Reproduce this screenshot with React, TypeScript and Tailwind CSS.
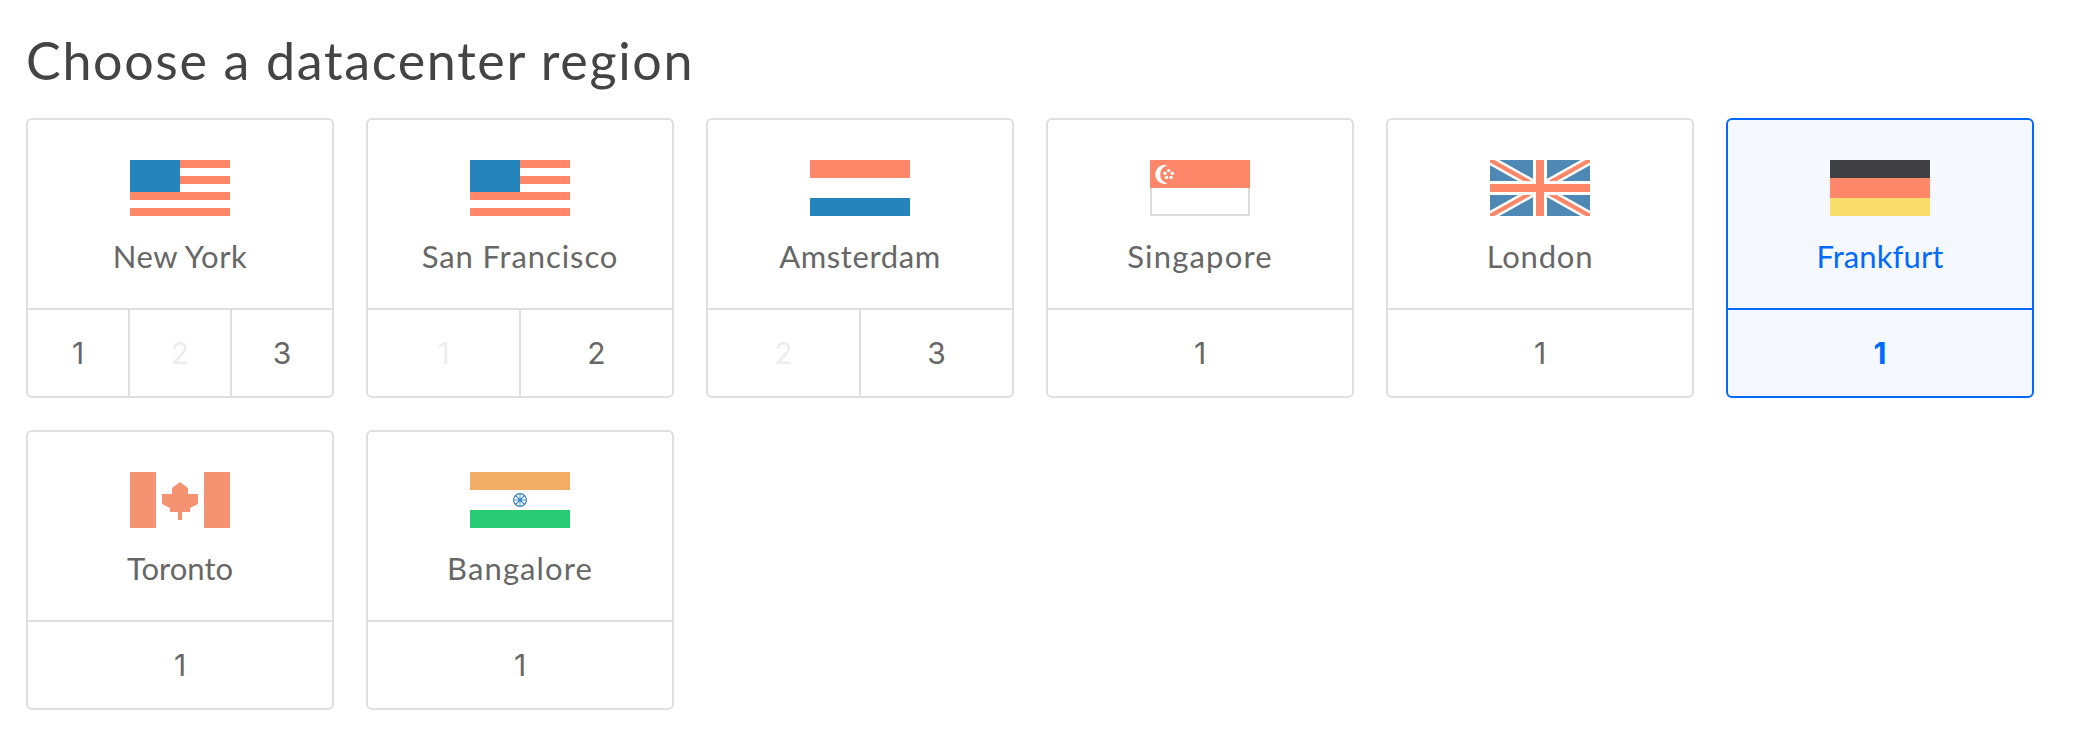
import type { ReactNode } from 'react';

type Slot = { label: string; disabled?: boolean };
type Region = {
  name: string;
  tracking: string;
  flag: ReactNode;
  slots: Slot[];
  selected?: boolean;
};

function Flag({ children }: { children: ReactNode }) {
  return (
    <svg width="100" height="56" viewBox="0 0 100 56" className="block h-14 w-[100px]">
      {children}
    </svg>
  );
}

const usa = (
  <Flag>
    <path fill="#ff8769" d="M0 0h100v8H0zM0 16h100v8H0zM0 32h100v8H0zM0 48h100v8H0z" />
    <path fill="#fff" d="M0 8h50v8H0z" />
    <path fill="#2584bc" d="M0 0h50v32H0z" />
  </Flag>
);

const netherlands = (
  <Flag>
    <path fill="#ff8769" d="M0 0h100v18H0z" />
    <path fill="#fff" d="M0 18h100v20H0z" />
    <path fill="#2584bc" d="M0 38h100v18H0z" />
  </Flag>
);

const singapore = (
  <Flag>
    <path fill="#fff" stroke="#dcdcdc" strokeWidth="2" d="M1 20V55H99V20" />
    <path fill="#ff8769" d="M0 0h100v28H0z" />
    <path fill="#fff" d="M17.5 5.3A9.5 9.5 0 1 0 17.5 23.5A9.3 9.3 0 0 1 17.5 5.3z" />
    <g fill="#fff">
      <circle cx="18.7" cy="10.6" r="1.7" />
      <circle cx="15" cy="13.3" r="1.7" />
      <circle cx="22.3" cy="13.3" r="1.7" />
      <circle cx="16.4" cy="17.4" r="1.7" />
      <circle cx="21" cy="17.4" r="1.7" />
    </g>
  </Flag>
);

const unitedKingdom = (
  <Flag>
    <path fill="#4e88b4" d="M0 0h100v56H0z" />
    <path stroke="#fff" strokeWidth="9.2" d="M-10 -5.6L110 61.6M110 -5.6L-10 61.6" />
    <path stroke="#ff8769" strokeWidth="4.2" d="M-10 -5.6L110 61.6M110 -5.6L-10 61.6" />
    <path fill="#fff" d="M43 0h14v56H43zM0 21h100v14H0z" />
    <path fill="#ff8769" d="M46 0h8v56h-8zM0 24h100v8H0z" />
  </Flag>
);

const germany = (
  <Flag>
    <path fill="#414042" d="M0 0h100v18H0z" />
    <path fill="#ff8769" d="M0 18h100v20H0z" />
    <path fill="#f9de6c" d="M0 38h100v18H0z" />
  </Flag>
);

const canada = (
  <Flag>
    <path fill="#f59272" d="M0 0h26v56H0zM74 0h26v56H74z" />
    <path
      fill="#f59272"
      d="M50 10L58 16V22H68V32L60 36V40H52V48H48V40H40V36L32 32V22H42V16z"
    />
  </Flag>
);

const india = (
  <Flag>
    <path fill="#f2ae66" d="M0 0h100v18H0z" />
    <path fill="#2acb75" d="M0 38h100v18H0z" />
    <g stroke="#3c84bd" fill="none">
      <circle cx="50" cy="28" r="6.4" strokeWidth="1.2" />
      <path strokeWidth="1.1" d="M45.5 23.5L54.5 32.5M54.5 23.5L45.5 32.5" />
      <path strokeWidth="1.6" opacity=".6" d="M50 21.5V34.5M43.5 28H56.5" />
    </g>
    <circle cx="50" cy="28" r="1.5" fill="#2584bc" />
  </Flag>
);

const regions: Region[] = [
  {
    name: 'New York',
    tracking: 'tracking-[0.5px]',
    flag: usa,
    slots: [{ label: '1' }, { label: '2', disabled: true }, { label: '3' }],
  },
  {
    name: 'San Francisco',
    tracking: 'tracking-[0.9px]',
    flag: usa,
    slots: [{ label: '1', disabled: true }, { label: '2' }],
  },
  {
    name: 'Amsterdam',
    tracking: 'tracking-[0.6px]',
    flag: netherlands,
    slots: [{ label: '2', disabled: true }, { label: '3' }],
  },
  { name: 'Singapore', tracking: 'tracking-[1.2px]', flag: singapore, slots: [{ label: '1' }] },
  { name: 'London', tracking: 'tracking-[0.8px]', flag: unitedKingdom, slots: [{ label: '1' }] },
  {
    name: 'Frankfurt',
    tracking: 'tracking-[0.1px]',
    flag: germany,
    slots: [{ label: '1' }],
    selected: true,
  },
  { name: 'Toronto', tracking: 'tracking-[0px]', flag: canada, slots: [{ label: '1' }] },
  { name: 'Bangalore', tracking: 'tracking-[1.1px]', flag: india, slots: [{ label: '1' }] },
];

function RegionCard({ name, tracking, flag, slots, selected }: Region) {
  const tone = selected
    ? 'border-[#0069ff] bg-[#f5f8ff] text-[#0069ff]'
    : 'border-[#dfdfdf] bg-white text-[#676767]';
  const line = selected ? 'border-[#0069ff]' : 'border-[#dfdfdf]';
  return (
    <div className={`flex h-[280px] flex-col overflow-hidden rounded-md border-2 ${tone}`}>
      <div className={`flex h-[190px] flex-col items-center border-b-2 pt-10 ${line}`}>
        {flag}
        <div className={`mt-5 text-[31px] leading-[40px] whitespace-nowrap ${tracking}`}>
          {name}
        </div>
      </div>
      <div className="flex flex-1">
        {slots.map((slot, i) => (
          <div
            key={slot.label}
            className={`box-content flex flex-1 items-center justify-center font-['Inter',sans-serif] text-[30px] leading-[40px] ${
              i < slots.length - 1 ? `border-r-2 ${line}` : ''
            } ${selected ? 'font-bold' : ''} ${slot.disabled ? 'text-[#ededed]' : ''}`}
          >
            {slot.label}
          </div>
        ))}
      </div>
    </div>
  );
}

export default function App() {
  return (
    <main className="min-h-[744px] bg-white px-[26px] pt-[30px] font-['Lato',sans-serif]">
      <h1 className="h-[88px] text-[52px] leading-[60px] tracking-[1.65px] text-[#444]">
        Choose a datacenter region
      </h1>
      <div className="grid grid-cols-[repeat(6,308px)] gap-8">
        {regions.map((region) => (
          <RegionCard key={region.name} {...region} />
        ))}
      </div>
    </main>
  );
}
